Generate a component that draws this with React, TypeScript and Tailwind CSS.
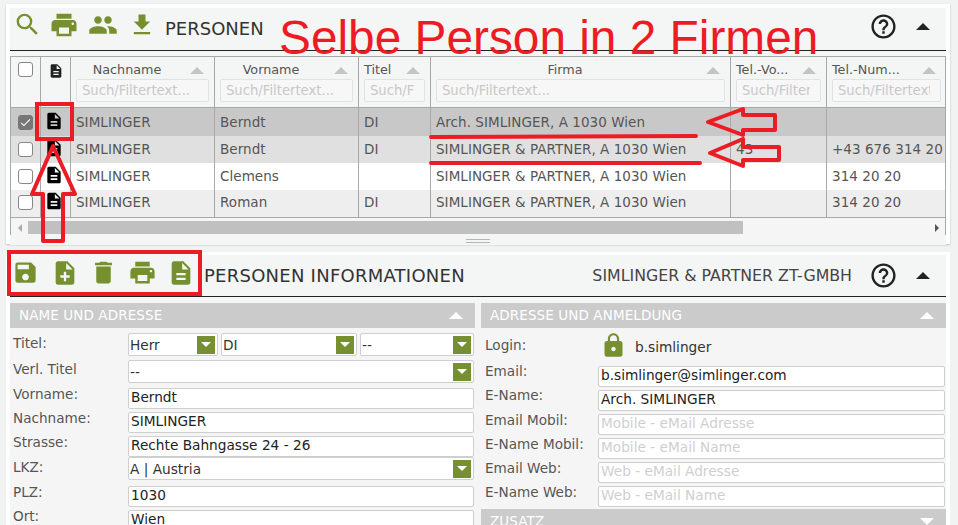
import React from "react";
import { MdSearch, MdPrint, MdPeople, MdFileDownload, MdSave, MdNoteAdd, MdDelete, MdDescription, MdLock, MdHelpOutline, MdCheck } from "react-icons/md";

const Tri = ({ down, color = "border-b-[#c4c4c4]", className = "" }: { down?: boolean; color?: string; className?: string }) => (
  <span className={`inline-block w-0 h-0 border-x-[7px] border-x-transparent ${down ? "border-t-[7px] border-t-white" : `border-b-[7px] ${color}`} ${className}`} />
);

const Box = ({ on }: { on?: boolean }) => (
  <span className={`w-[15px] h-[15px] rounded-[3px] border flex items-center justify-center ${on ? "bg-[#777] border-[#777]" : "bg-white border-[#888]"}`}>
    {on && <MdCheck className="text-white" size={15} />}
  </span>
);

const cols = "grid grid-cols-[30px_30px_144px_144px_72px_300px_96px_119px]";

const Head = ({ label, ph, center = true, last }: { label: string; ph: string; center?: boolean; last?: boolean }) => (
  <div className={`h-[50px] border-r border-[#a8a8a8] px-[5px] pt-[5px] flex flex-col ${last ? "border-r-0" : ""}`}>
    <div className="h-[16px] flex items-center text-[12.75px] text-[#555] leading-none">
      <span className={`flex-1 whitespace-nowrap ${center ? "text-center pr-[12px]" : ""}`}>{label}</span>
      <Tri className="mr-[5px]" />
    </div>
    <input
      readOnly
      placeholder={ph}
      className="mt-[1px] w-full h-[23px] rounded-[2px] border border-[#e2e2e2] bg-[#f7f7f7] pl-[5px] pr-[10px] text-[13.2px] placeholder:text-[#c8c8c8] outline-none"
    />
  </div>
);

const rows = [
  { bg: "bg-[#c8c8c8]", h: "h-[28px]", on: true, v: "Berndt", t: "DI", f: "Arch. SIMLINGER, A 1030 Wien", vo: "", n: "" },
  { bg: "bg-[#e0e0e0]", h: "h-[27px]", v: "Berndt", t: "DI", f: "SIMLINGER & PARTNER, A 1030 Wien", vo: "43", n: "+43 676 314 20" },
  { bg: "bg-white", h: "h-[27px]", v: "Clemens", t: "", f: "SIMLINGER & PARTNER, A 1030 Wien", vo: "", n: "314 20 20" },
  { bg: "bg-[#eeeeee]", h: "h-[27px]", v: "Roman", t: "DI", f: "SIMLINGER & PARTNER, A 1030 Wien", vo: "", n: "314 20 20" },
];

const Cell = ({ children, last, up }: { children?: React.ReactNode; last?: boolean; up?: boolean }) => (
  <div className={`border-[#a8a8a8] px-[5px] flex items-center text-[13.5px] tracking-[0.05px] text-[#555] whitespace-nowrap overflow-hidden ${last ? "" : "border-r"} ${up ? "pb-[2px]" : ""}`}>{children}</div>
);

const Label = ({ children }: { children: React.ReactNode }) => (
  <div className="text-[13.6px] text-[#555] leading-none whitespace-nowrap">{children}</div>
);

const Input = ({ value, ph }: { value?: string; ph?: string }) => (
  <input
    readOnly
    value={value ?? ""}
    placeholder={ph}
    className="w-full h-[21px] bg-white border border-[#cfcfcf] rounded-[2px] px-[2px] pb-[2px] leading-[15px] text-[13.7px] text-[#222] placeholder:text-[#cfcfcf] outline-none"
  />
);

const Select = ({ value, className = "" }: { value: string; className?: string }) => (
  <div className={`h-[23px] bg-white border border-[#cfcfcf] rounded-[2px] flex items-center pl-[1px] pr-[2px] ${className}`}>
    <span className="flex-1 pt-[2px] text-[13.7px] text-[#333] whitespace-nowrap">{value}</span>
    <span className="w-[18px] h-[18px] bg-[#76902f] flex items-center justify-center">
      <span className="w-0 h-0 border-x-[5px] border-x-transparent border-t-[5px] border-t-white" />
    </span>
  </div>
);

const Section = ({ title, down }: { title: string; down?: boolean }) => (
  <div className="h-[25px] bg-[#cbcbcb] flex items-center justify-between pl-[9px] pr-[12px] text-[13.5px] tracking-[0.1px] text-white whitespace-nowrap">
    <span>{title}</span>
    {down ? <Tri down /> : <span className="w-0 h-0 border-x-[7px] border-x-transparent border-b-[7px] border-b-white" />}
  </div>
);

const FormRow = ({ label, w, children, h, pt = "pt-[3px]" }: { label: string; w: string; children: React.ReactNode; h: string; pt?: string }) => (
  <div className={`flex ${h}`}>
    <div className={`${w} shrink-0 ${pt}`}><Label>{label}</Label></div>
    <div className="flex-1 min-w-0">{children}</div>
  </div>
);

const green = "text-[#76902f]";

export default function App() {
  return (
    <div className="relative w-[958px] h-[525px] overflow-hidden bg-[#f1f3f2] font-['DejaVu_Sans',sans-serif]">
      <div className="pt-[4px] pl-[6px]">
        {/* Personen panel */}
        <div className="w-[944px] h-[240px] bg-white shadow-[0_1px_2px_rgba(0,0,0,0.2)] pt-[4px] px-[4px]">
          <div className="w-[936px] bg-[#f4f6f5]">
            <div className="h-[43px] border-b border-[#222] flex items-center pb-[9px] pl-[3px]">
              <MdSearch size={29} className={green} />
              <MdPrint size={30} className={`${green} ml-[7px]`} />
              <MdPeople size={30} className={`${green} ml-[9px]`} />
              <MdFileDownload size={28} className={`${green} ml-[10px]`} />
              <span className="ml-[9px] mt-[7px] text-[18px] text-[#333]">PERSONEN</span>
              <span className="flex-1" />
              <MdHelpOutline size={29} className="text-[#222] mr-[18px] mt-[4px]" />
              <Tri color="border-b-[#222]" className="mr-[16px] mt-[3px]" />
            </div>
            <div className="mt-[5px] border border-[#a8a8a8] border-b-0">
              <div className={`${cols} border-b border-[#a8a8a8]`}>
                <div className="h-[50px] border-r border-[#a8a8a8] pt-[5px] pl-[7px]"><Box /></div>
                <div className="h-[50px] border-r border-[#a8a8a8] pt-[6px] pl-[7px]"><MdDescription size={16} className="text-[#222]" /></div>
                <Head label="Nachname" ph="Such/Filtertext..." />
                <Head label="Vorname" ph="Such/Filtertext..." />
                <Head label="Titel" ph="Such/Filtertext..." center={false} />
                <Head label="Firma" ph="Such/Filtertext..." />
                <Head label="Tel.-Vo..." ph="Such/Filtertext..." center={false} />
                <Head label="Tel.-Num..." ph="Such/Filtertext..." center={false} last />
              </div>
              {rows.map((r, i) => {
                const up = i === 3;
                return (
                  <div key={i} className={`${cols} ${r.bg} ${r.h}`}>
                    <Cell up={up}><span className="ml-[2px]"><Box on={r.on} /></span></Cell>
                    <Cell up={up}><MdDescription size={20} className="text-black shrink-0 -ml-[2px] -mt-[3px]" /></Cell>
                    <Cell up={up}>SIMLINGER</Cell>
                    <Cell up={up}>{r.v}</Cell>
                    <Cell up={up}>{r.t}</Cell>
                    <Cell up={up}>{r.f}</Cell>
                    <Cell up={up}>{r.vo}</Cell>
                    <Cell last up={up}>{r.n}</Cell>
                  </div>
                );
              })}
              <div className="border-t border-[#a8a8a8] h-[18px] pt-[3px] bg-[#f5f5f5] flex items-start">
                <span className="w-[17px] h-[13px] flex items-center justify-center"><span className="w-0 h-0 border-y-[4px] border-y-transparent border-r-[4px] border-r-[#aaa]" /></span>
                <div className="w-[715px] h-[13px] bg-[#c0c0c0]" />
                <span className="flex-1" />
                <span className="w-[17px] h-[13px] flex items-center justify-center"><span className="w-0 h-0 border-y-[4px] border-y-transparent border-l-[4px] border-l-[#555]" /></span>
              </div>
            </div>
            <div className="h-[10px] flex justify-center items-start pt-[4px]">
              <span className="w-[24px] h-[4px] border-y border-[#b5b5b5]" />
            </div>
          </div>
        </div>

        {/* Informationen panel */}
        <div className="mt-[8px] w-[944px] h-[280px] bg-white pt-[3px] px-[4px]">
          <div className="w-[936px] h-[277px] bg-[#f5f5f5]">
            <div className="h-[42px] bg-[#f4f6f5] border-b border-[#222] flex items-center pl-[2px]">
              <div className="flex items-center -mt-[6px]">
                <MdSave size={27} className={green} />
                <MdNoteAdd size={28} className={`${green} ml-[12px]`} />
                <MdDelete size={29} className={`${green} ml-[10px]`} />
                <MdPrint size={29} className={`${green} ml-[10px]`} />
                <MdDescription size={28} className={`${green} ml-[10px]`} />
              </div>
              <span className="ml-[9px] text-[18px] tracking-[0.25px] text-[#333] whitespace-nowrap">PERSONEN INFORMATIONEN</span>
              <span className="flex-1" />
              <span className="text-[15.8px] text-[#444] whitespace-nowrap mr-[17px]">SIMLINGER &amp; PARTNER ZT-GMBH</span>
              <MdHelpOutline size={29} className="text-[#222] mr-[18px]" />
              <Tri color="border-b-[#222]" className="mr-[16px]" />
            </div>
            <div className="mt-[6px] grid grid-cols-[465px_465px] gap-x-[6px]">
              <div>
                <Section title="NAME UND ADRESSE" />
                <div className="pt-[5px] pl-[3px] pr-[1px] flex flex-col">
                  <FormRow label="Titel:" w="w-[115px]" h="h-[27px]" pt="pt-[4px]">
                    <div className="grid grid-cols-[90px_136px_114px] gap-x-[3px]">
                      <Select value="Herr" />
                      <Select value="DI" />
                      <Select value="--" />
                    </div>
                  </FormRow>
                  <FormRow label="Verl. Titel" w="w-[115px]" h="h-[25px]"><Select value="--" /></FormRow>
                  <FormRow label="Vorname:" w="w-[115px]" h="h-[24px]"><Input value="Berndt" /></FormRow>
                  <FormRow label="Nachname:" w="w-[115px]" h="h-[24px]"><Input value="SIMLINGER" /></FormRow>
                  <FormRow label="Strasse:" w="w-[115px]" h="h-[24px]"><Input value="Rechte Bahngasse 24 - 26" /></FormRow>
                  <FormRow label="LKZ:" w="w-[115px]" h="h-[26px]" pt="pt-[4px]"><Select value="A | Austria" /></FormRow>
                  <FormRow label="PLZ:" w="w-[115px]" h="h-[24px]"><Input value="1030" /></FormRow>
                  <FormRow label="Ort:" w="w-[115px]" h="h-[24px]"><Input value="Wien" /></FormRow>
                </div>
              </div>
              <div>
                <Section title="ADRESSE UND ANMELDUNG" />
                <div className="pl-[4px] pr-[1px] flex flex-col">
                  <div className="flex h-[35px] items-center">
                    <div className="w-[113px] shrink-0"><Label>Login:</Label></div>
                    <MdLock size={27} className={`${green} ml-[2px]`} />
                    <span className="ml-[8px] mt-[3px] text-[13.7px] text-[#333]">b.simlinger</span>
                  </div>
                  <FormRow label="Email:" w="w-[113px]" h="h-[24px]" pt="pt-[2px]"><Input value="b.simlinger@simlinger.com" /></FormRow>
                  <FormRow label="E-Name:" w="w-[113px]" h="h-[24px]" pt="pt-[2px]"><Input value="Arch. SIMLINGER" /></FormRow>
                  <FormRow label="Email Mobil:" w="w-[113px]" h="h-[24px]"><Input ph="Mobile - eMail Adresse" /></FormRow>
                  <FormRow label="E-Name Mobil:" w="w-[113px]" h="h-[24px]"><Input ph="Mobile - eMail Name" /></FormRow>
                  <FormRow label="Email Web:" w="w-[113px]" h="h-[24px]"><Input ph="Web - eMail Adresse" /></FormRow>
                  <FormRow label="E-Name Web:" w="w-[113px]" h="h-[26px]"><Input ph="Web - eMail Name" /></FormRow>
                </div>
                <Section title="ZUSATZ" down />
              </div>
            </div>
          </div>
        </div>
      </div>

      {/* Red annotations drawn over the screenshot */}
      <div className="absolute left-[279px] top-[12px] text-[47.8px] leading-[52px] text-[#ed1c24] whitespace-nowrap font-['Liberation_Sans',sans-serif]">Selbe Person in 2 Firmen</div>
      <svg className="absolute left-0 top-0 pointer-events-none" width="958" height="525" fill="none" stroke="#ed1c24" strokeWidth="4" strokeLinejoin="round" strokeLinecap="round">
        <rect x="37" y="104" width="35" height="35" strokeLinecap="butt" strokeLinejoin="miter" />
        <rect x="9" y="252" width="191" height="42" strokeLinecap="butt" strokeLinejoin="miter" />
        <path d="M53 146 L32 194 L43 194 L43 241 L63 241 L63 194 L75 194 Z" />
        <path d="M708 122 L743 109 L743 115 L775 115 L775 130 L743 130 L743 135 Z" />
        <path d="M710 153 L743 139 L743 147 L779 147 L779 160 L743 160 L743 166 Z" />
        <path d="M431 137 L696 136" />
        <path d="M431 163 L700 163" />
      </svg>
    </div>
  );
}
